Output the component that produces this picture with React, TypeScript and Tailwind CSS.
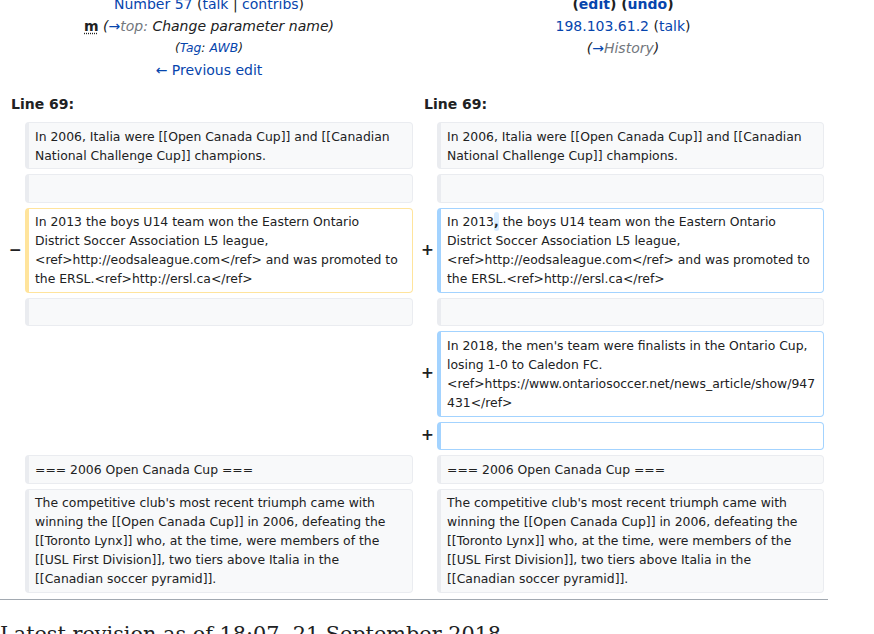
const link = "text-[#0645ad]";

type Kind = "context" | "del" | "add";

function Cell({ kind, children }: { kind: Kind; children?: React.ReactNode }) {
  const tone =
    kind === "context"
      ? "bg-[#f8f9fa] border-[#eaecf0]"
      : kind === "del"
        ? "bg-white border-[#ffe49c]"
        : "bg-white border-[#a3d3ff]";
  return (
    <div
      className={`rounded-[4px] border border-l-4 px-[6px] py-[3.7px] text-[12.4px] leading-[19px] whitespace-pre-wrap break-words ${tone}`}
    >
      {children ?? "\u00a0"}
    </div>
  );
}

function Marker({ sign }: { sign?: string }) {
  return (
    <div className="flex items-center justify-end pr-[3px] text-[15.4px] font-bold leading-none">
      {sign}
    </div>
  );
}

const rows: { left?: [Kind, React.ReactNode?]; right?: [Kind, React.ReactNode?]; lm?: string; rm?: string }[] = [
  {
    left: ["context", "In 2006, Italia were [[Open Canada Cup]] and [[Canadian National Challenge Cup]] champions."],
    right: ["context", "In 2006, Italia were [[Open Canada Cup]] and [[Canadian National Challenge Cup]] champions."],
  },
  { left: ["context"], right: ["context"] },
  {
    lm: "\u2212",
    rm: "+",
    left: [
      "del",
      "In 2013 the boys U14 team won the Eastern Ontario District Soccer Association L5 league, <ref>http://eodsaleague.com</ref> and was promoted to the ERSL.<ref>http://ersl.ca</ref>",
    ],
    right: [
      "add",
      <>
        In 2013<ins className="rounded-[3px] bg-[#d8ecff] py-[2px] font-bold no-underline">,</ins> the boys U14 team
        won the Eastern Ontario District Soccer Association L5 league, {"<ref>http://eodsaleague.com</ref>"} and was
        promoted to the ERSL.{"<ref>http://ersl.ca</ref>"}
      </>,
    ],
  },
  { left: ["context"], right: ["context"] },
  {
    rm: "+",
    right: [
      "add",
      "In 2018, the men's team were finalists in the Ontario Cup, losing 1-0 to Caledon FC. <ref>https://www.ontariosoccer.net/news_article/show/947431</ref>",
    ],
  },
  { rm: "+", right: ["add"] },
  { left: ["context", "=== 2006 Open Canada Cup ==="], right: ["context", "=== 2006 Open Canada Cup ==="] },
  {
    left: [
      "context",
      "The competitive club's most recent triumph came with winning the [[Open Canada Cup]] in 2006, defeating the [[Toronto Lynx]] who, at the time, were members of the [[USL First Division]], two tiers above Italia in the [[Canadian soccer pyramid]].",
    ],
    right: [
      "context",
      "The competitive club's most recent triumph came with winning the [[Open Canada Cup]] in 2006, defeating the [[Toronto Lynx]] who, at the time, were members of the [[USL First Division]], two tiers above Italia in the [[Canadian soccer pyramid]].",
    ],
  },
];

export default function App() {
  return (
    <div className="h-[634px] overflow-hidden bg-white font-['DejaVu_Sans',sans-serif] text-[#202122]">
      <div className="w-[828px]">
        {/* revision headers */}
        <div className="mt-[-7.5px] grid grid-cols-[418px_410px] text-center text-[14px] leading-[22px]">
          <div>
            <div>
              <span className={link}>Number 57</span> (<span className={link}>talk</span> |{" "}
              <span className={link}>contribs</span>)
            </div>
            <div>
              <abbr className="font-bold underline decoration-dotted underline-offset-2">m</abbr>{" "}
              <span className="italic">
                (<span className={link}>→</span>
                <span className="text-[#72777d]">top: </span>Change parameter name)
              </span>
            </div>
            <div className="text-[12.32px] italic">
              (<span className={link}>Tag</span>: <span className={link}>AWB</span>)
            </div>
            <div className={link}>← Previous edit</div>
          </div>
          <div>
            <div className="font-bold">
              (<span className={link}>edit</span>) (<span className={link}>undo</span>)
            </div>
            <div>
              <span className={link}>198.103.61.2</span> (<span className={link}>talk</span>)
            </div>
            <div className="italic">
              (<span className={link}>→</span>
              <span className="text-[#72777d]">History</span>)
            </div>
          </div>
        </div>

        {/* diff table */}
        <div className="grid grid-cols-[25px_388px_24px_387px] gap-y-[5px]">
          <div className="col-span-2 pt-[12.5px] pb-[1.5px] pl-[11px] text-[14px] font-bold leading-[22.4px]">
            Line 69:
          </div>
          <div className="col-span-2 pt-[12.5px] pb-[1.5px] pl-[11px] text-[14px] font-bold leading-[22.4px]">
            Line 69:
          </div>
          {rows.map((r, i) => (
            <div key={i} className="contents">
              <Marker sign={r.lm} />
              {r.left ? <Cell kind={r.left[0]}>{r.left[1]}</Cell> : <div />}
              <Marker sign={r.rm} />
              {r.right ? <Cell kind={r.right[0]}>{r.right[1]}</Cell> : <div />}
            </div>
          ))}
        </div>

        <div className="mt-[6px] h-px bg-[#a2a9b1]" />
        <h2 className="mt-[21px] font-['DejaVu_Serif',serif] text-[20.8px] leading-[1.3]">
          Latest revision as of 18:07, 21 September 2018
        </h2>
      </div>
    </div>
  );
}
